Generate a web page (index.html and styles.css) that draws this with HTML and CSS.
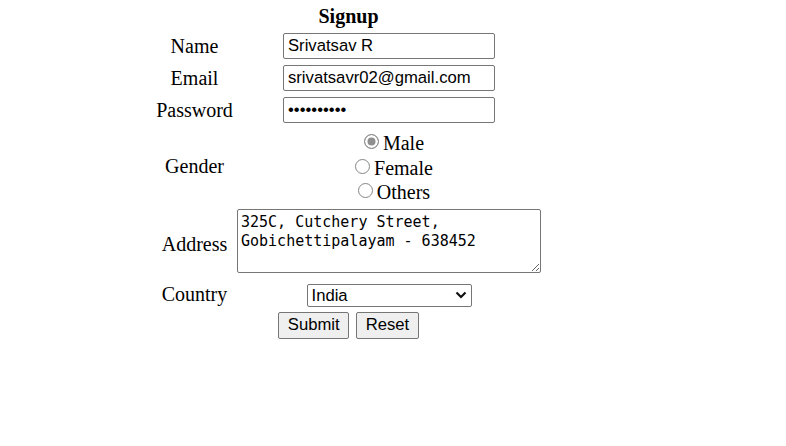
FILE: index.html
```html
<!DOCTYPE html>
<html lang="en">
<head>
<meta charset="utf-8">
<title>Signup</title>
<link rel="stylesheet" href="styles.css">
</head>
<body>
<form class="signup">
  <div class="title">Signup</div>

  <label class="lbl" for="name">Name</label>
  <div class="field"><input id="name" class="text" type="text" value="Srivatsav R"></div>

  <label class="lbl" for="email">Email</label>
  <div class="field"><input id="email" class="text" type="text" value="srivatsavr02@gmail.com"></div>

  <label class="lbl" for="pwd">Password</label>
  <div class="field"><input id="pwd" class="text" type="password" value="abcdefghij"></div>

  <div class="lbl">Gender</div>
  <div class="field radios">
    <label class="opt"><input class="radio" type="radio" name="gender" checked>Male</label>
    <label class="opt"><input class="radio" type="radio" name="gender">Female</label>
    <label class="opt"><input class="radio" type="radio" name="gender">Others</label>
  </div>

  <label class="lbl lbl-address" for="addr">Address</label>
  <div class="field field-address"><textarea id="addr" class="area">325C, Cutchery Street,
Gobichettipalayam - 638452</textarea></div>

  <label class="lbl lbl-country" for="country">Country</label>
  <div class="field field-country">
    <span class="select-wrap">
      <select id="country" class="select">
        <option>India</option>
        <option>USA</option>
        <option>UK</option>
      </select>
      <svg class="chev" width="12" height="8" viewBox="0 0 12 8" aria-hidden="true"><path d="M1.5 1.5 L6 6 L10.5 1.5" fill="none" stroke="#111" stroke-width="2.2"/></svg>
    </span>
  </div>

  <div class="actions">
    <button class="btn" type="button">Submit</button>
    <button class="btn" type="reset">Reset</button>
  </div>
</form>
</body>
</html>
```
FILE: styles.css
```css
html, body {
  margin: 0;
  padding: 0;
  background: #fff;
}

body {
  font-family: "Liberation Serif", "Times New Roman", serif;
  font-size: 20px;
  line-height: 23px;
  color: #000;
}

.signup {
  margin-left: 155px;
  padding-top: 5px;
  width: 387px;
  display: grid;
  grid-template-columns: 79px 306px;
  column-gap: 2px;
  row-gap: 6px;
}

.title {
  grid-column: 1 / -1;
  text-align: center;
  font-weight: bold;
  margin-bottom: -1px;
}

.lbl {
  text-align: center;
  align-self: center;
  white-space: nowrap;
}

.field {
  display: flex;
  justify-content: center;
  align-items: center;
}

.text {
  box-sizing: border-box;
  width: 212px;
  height: 26px;
  margin: 0;
  padding: 0 4px;
  border: 1px solid #767676;
  border-radius: 2px;
  font-family: "Liberation Sans", Arial, sans-serif;
  font-size: 16.67px;
  color: #000;
  background: #fff;
}

.radios {
  flex-direction: column;
  align-items: center;
  padding-top: 2px;
}

.opt {
  display: block;
  line-height: 24.5px;
  height: 24.5px;
  white-space: nowrap;
}

.radio {
  -webkit-appearance: none;
  appearance: none;
  box-sizing: border-box;
  width: 15px;
  height: 15px;
  margin: 0 4px 0 10px;
  border: 1px solid #858585;
  border-radius: 50%;
  background: #fff;
  vertical-align: 1px;
}

.radio:checked {
  background: #8f8f8f;
  box-shadow: inset 0 0 0 2.5px #fff;
  border-color: #8a8a8a;
}

.lbl-address,
.field-address {
  margin-top: -2px;
}

.lbl-address {
  padding-top: 7px;
}

.area {
  box-sizing: border-box;
  width: 304px;
  height: 64px;
  margin: 0;
  padding: 3px 3px 1px;
  border: 1px solid #767676;
  border-radius: 2px;
  font-family: "DejaVu Sans Mono", "Liberation Mono", monospace;
  font-size: 15px;
  line-height: 19.5px;
  color: #000;
  background: #fff;
}

.lbl-country,
.field-country {
  align-self: baseline;
  margin-top: 4px;
}

.field-country {
  align-items: baseline;
}

.select-wrap {
  position: relative;
  display: inline-block;
}

.select {
  -webkit-appearance: none;
  appearance: none;
  box-sizing: border-box;
  width: 165px;
  height: 23px;
  margin: 0;
  padding: 0 4px;
  border: 1px solid #767676;
  border-radius: 2px;
  font-family: "Liberation Sans", Arial, sans-serif;
  font-size: 16.67px;
  color: #000;
  background: #fff;
}

.chev {
  position: absolute;
  right: 5px;
  top: 8px;
  pointer-events: none;
}

.actions {
  grid-column: 1 / -1;
  display: flex;
  justify-content: center;
  gap: 7px;
  margin-top: -1px;
}

.btn {
  box-sizing: border-box;
  height: 27px;
  margin: 0;
  padding: 0 8.5px;
  border: 1px solid #767676;
  border-radius: 2px;
  background: #efefef;
  font-family: "Liberation Sans", Arial, sans-serif;
  font-size: 16.67px;
  color: #000;
}
```
